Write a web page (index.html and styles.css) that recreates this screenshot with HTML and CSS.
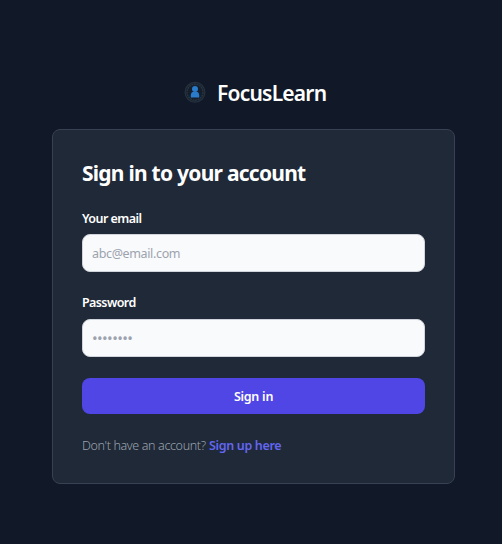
FILE: index.html
```html
<!DOCTYPE html>
<html lang="en">
<head>
<meta charset="utf-8">
<title>FocusLearn</title>
<link rel="stylesheet" href="styles.css">
</head>
<body>
<main class="page">
  <a class="brand">
    <svg class="logo" viewBox="0 0 22 22" aria-hidden="true">
      <circle cx="11" cy="11.2" r="9.9" fill="#151e2b" stroke="#26313e" stroke-width="1.3"/>
      <circle cx="11" cy="11.2" r="8" fill="none" stroke="#293542" stroke-width="1.4" stroke-dasharray="2 .6"/>
      <circle cx="11" cy="7.9" r="3" fill="#2b7bcb"/>
      <path d="M6.8 16.6v-2.4c0-2.3 1.5-3.4 3-3.4h2.4c1.5 0 3 1.1 3 3.4v2.4z" fill="#2b7bcb"/>
    </svg>
    <span class="brand-name">FocusLearn</span>
  </a>
  <section class="card">
    <h1 class="title">Sign in to your account</h1>
    <form class="form">
      <div class="field">
        <label class="label label-email" for="email">Your email</label>
        <input class="input" id="email" type="email" placeholder="abc@email.com">
      </div>
      <div class="field">
        <label class="label label-password" for="password">Password</label>
        <input class="input input-password" id="password" type="password" placeholder="••••••••">
      </div>
      <button class="submit" type="button">Sign in</button>
      <p class="signup"><span class="prompt">Don't have an account?</span> <a class="link">Sign up here</a></p>
    </form>
  </section>
</main>
</body>
</html>
```
FILE: styles.css
```css
* { box-sizing: border-box; }
body {
  margin: 0;
  background: #111827;
  font-family: "Noto Sans", "Open Sans", sans-serif;
  color: #fff;
}
.page {
  min-height: 544px;
  padding: 77px 47px 0 52px;
}
.brand {
  display: flex;
  align-items: center;
  height: 32px;
  margin-bottom: 20px;
  padding-left: 132px;
}
.logo { width: 22px; height: 22px; margin: 0 11px 2px 0; }
.brand-name {
  font-size: 21px;
  font-weight: 600;
  line-height: 32px;
  letter-spacing: -0.78px;
}
.card {
  height: 355px;
  padding: 29px;
  background: #1f2937;
  border: 1px solid #374151;
  border-radius: 8px;
}
.title {
  margin: 0 0 23px;
  font-size: 21px;
  font-weight: 700;
  line-height: 28px;
  letter-spacing: -0.75px;
  white-space: nowrap;
}
.field { margin-bottom: 22px; }
.field + .field { margin-bottom: 21px; }
.label {
  display: block;
  height: 18px;
  margin-bottom: 6px;
  font-size: 12.5px;
  font-weight: 600;
  line-height: 18px;
  letter-spacing: -0.55px;
}
.label-password { height: 19px; letter-spacing: -0.6px; }
.input {
  display: block;
  width: 100%;
  height: 38px;
  padding: 0 9px;
  background: #f9fafb;
  border: 1px solid #d1d5db;
  border-radius: 8px;
  font: 400 12.5px/18px "Noto Sans", sans-serif;
  letter-spacing: -0.35px;
}
.input::placeholder { color: #9ca3af; opacity: 1; }
.input-password { font-size: 15px; letter-spacing: -0.6px; }
.submit {
  display: block;
  width: 100%;
  height: 36px;
  padding: 1px 0 0;
  border: 0;
  border-radius: 8px;
  background: #4f46e5;
  color: #fff;
  font: 600 12.5px/18px "Noto Sans", sans-serif;
  letter-spacing: -0.25px;
}
.signup {
  margin: 23px 0 0;
  font-size: 12.5px;
  line-height: 18px;
  white-space: nowrap;
}
.prompt { color: #9ca3af; font-weight: 300; letter-spacing: -0.36px; }
.link { color: #6366f1; font-weight: 600; letter-spacing: -0.33px; }
```
